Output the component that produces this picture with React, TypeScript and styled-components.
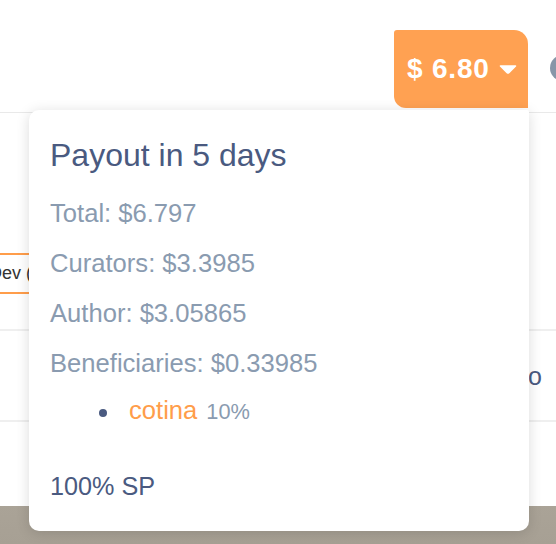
import React from "react";
import styled, { createGlobalStyle } from "styled-components";

const GlobalStyle = createGlobalStyle`
  html, body { margin: 0; padding: 0; background: #ffffff; }
  body { font-family: "Liberation Sans", Arial, sans-serif; overflow: hidden; }
  * { box-sizing: border-box; }
`;

const Page = styled.div`
  position: relative;
  width: 556px;
  height: 544px;
  overflow: hidden;
  display: flex;
  flex-direction: column;
  background: #ffffff;
`;

const Header = styled.header`
  height: 113px;
  flex: none;
  border-bottom: 1.5px solid #e9e9e9;
  display: flex;
  justify-content: flex-end;
  align-items: flex-start;
  padding-top: 30px;
  margin-right: -20px;
  gap: 22px;
`;

const PayoutButton = styled.button`
  width: 134px;
  height: 78px;
  border: none;
  background: #ffa152;
  color: #ffffff;
  border-radius: 3px 14px 0 12px;
  display: flex;
  align-items: center;
  gap: 9px;
  padding: 0 0 0 13px;
  font-family: "Liberation Sans", Arial, sans-serif;
  font-weight: 700;
  font-size: 28px;
  letter-spacing: 0.8px;
  cursor: pointer;
`;

const Avatar = styled.div`
  width: 26px;
  height: 26px;
  border-radius: 50%;
  background: #8796a8;
  margin-top: 25px;
  flex: none;
`;

const TagSection = styled.section`
  height: 218px;
  flex: none;
  border-bottom: 2px solid #efefef;
  display: flex;
  flex-direction: column;
  justify-content: flex-end;
  padding-bottom: 35px;
`;

const Tag = styled.div`
  align-self: flex-start;
  height: 41px;
  margin-left: -13px;
  padding: 0 40px 0 0;
  border: 2px solid #ff9d4a;
  border-radius: 4px;
  display: flex;
  align-items: center;
  font-size: 18px;
  color: #333333;
`;

const Row = styled.section`
  height: 91px;
  flex: none;
  border-bottom: 2px solid #efefef;
  display: flex;
  justify-content: flex-end;
  align-items: center;
  padding-right: 14px;
  padding-top: 2px;
`;

const RowText = styled.span`
  font-size: 25px;
  color: #4a5a80;
`;

const Spacer = styled.div`
  flex: 1;
`;

const PhotoStrip = styled.div`
  height: 38px;
  flex: none;
  background: linear-gradient(180deg, #aaa397 0%, #a7a094 100%);
`;

const Popover = styled.div`
  position: absolute;
  left: 29px;
  top: 110px;
  width: 500px;
  height: 421px;
  background: #ffffff;
  border-radius: 10px 2px 10px 10px;
  box-shadow: 0 2px 14px rgba(0, 0, 0, 0.14);
  padding: 26px 21px 0 21px;
  display: flex;
  flex-direction: column;
`;

const Title = styled.h3`
  margin: 0 0 14px 0;
  font-size: 32px;
  line-height: 38px;
  font-weight: 400;
  color: #4a5a80;
`;

const Line = styled.div`
  font-size: 25.6px;
  line-height: 50px;
  color: #8a9bb0;
`;

const List = styled.ul`
  margin: 0;
  padding: 0;
  list-style: none;
`;

const Item = styled.li`
  display: flex;
  align-items: baseline;
  font-size: 25.6px;
  line-height: 40px;
  padding-top: 2px;
`;

const Dot = styled.span`
  width: 8px;
  height: 8px;
  border-radius: 50%;
  background: #4a5a80;
  margin: 0 22px 0 49px;
  flex: none;
  align-self: center;
  position: relative;
  top: 2px;
`;

const Account = styled.span`
  color: #ff9d4a;
`;

const Percent = styled.span`
  color: #8a9bb0;
  font-size: 21.8px;
  margin-left: 9px;
`;

const Footer = styled.div`
  margin-top: 34px;
  font-size: 25.2px;
  line-height: 40px;
  color: #4a5a80;
`;

const Caret = () => (
  <svg width="18" height="9" viewBox="0 0 18 9" aria-hidden="true">
    <path d="M1.5 1 L16.5 1 L9.8 7.6 Q9 8.3 8.2 7.6 Z" fill="#ffffff" stroke="#ffffff" strokeWidth="1.6" strokeLinejoin="round" />
  </svg>
);

export default function App() {
  return (
    <>
      <GlobalStyle />
      <Page>
        <Header>
          <PayoutButton>
            <span>$ 6.80</span>
            <Caret />
          </PayoutButton>
          <Avatar />
        </Header>
        <TagSection>
          <Tag>Dev (</Tag>
        </TagSection>
        <Row>
          <RowText>Hello</RowText>
        </Row>
        <Spacer />
        <PhotoStrip />
        <Popover>
          <Title>Payout in 5 days</Title>
          <Line>Total: $6.797</Line>
          <Line>Curators: $3.3985</Line>
          <Line>Author: $3.05865</Line>
          <Line>Beneficiaries: $0.33985</Line>
          <List>
            <Item>
              <Dot />
              <Account>cotina</Account>
              <Percent>10%</Percent>
            </Item>
          </List>
          <Footer>100% SP</Footer>
        </Popover>
      </Page>
    </>
  );
}
